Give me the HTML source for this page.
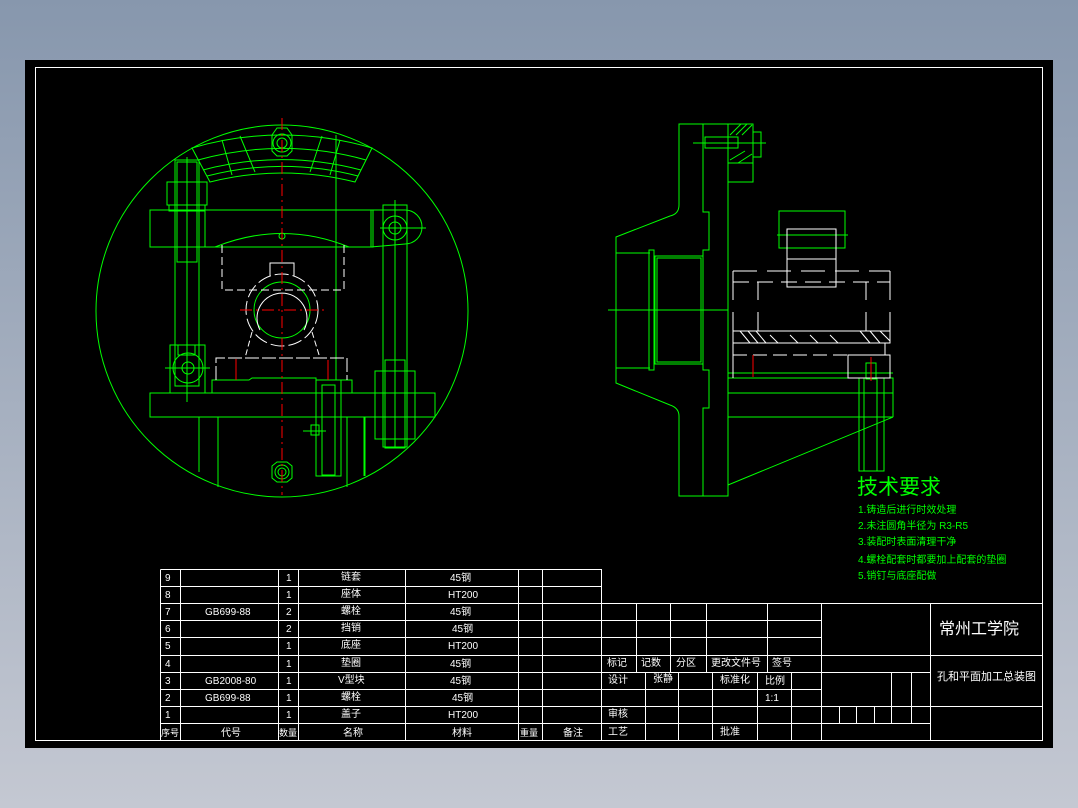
<!DOCTYPE html>
<html><head><meta charset="utf-8"><style>
html,body{margin:0;padding:0;}
body{width:1078px;height:808px;background:linear-gradient(#8797ad,#c4c8d2);overflow:hidden;}
svg{position:absolute;left:0;top:0;}
text{font-family:"Liberation Sans","Noto Sans CJK SC",sans-serif;}
</style></head><body>
<svg width="1078" height="808" viewBox="0 0 1078 808">
<rect x="25" y="60" width="1028" height="688" fill="#000"/>
<rect x="35.5" y="67.5" width="1007" height="673" fill="none" stroke="#fff" stroke-width="1"/>

<!-- LEFT VIEW -->
<g fill="none" stroke="#0f0" stroke-width="1">
<circle cx="282" cy="311" r="186"/>
<!-- top arc segment -->
<path d="M192 148 A318 318 0 0 1 372 148 L355 182 A296 296 0 0 0 210 182 Z"/>
<path d="M198 160 A310 310 0 0 1 366 160"/>
<path d="M203 170 A305 305 0 0 1 361 170"/>
<path d="M207 176 A300 300 0 0 1 358 176"/>
<path d="M222 140 L232 175 M240 136 L255 172 M322 136 L310 172 M340 140 L330 175"/>
<!-- top nut -->
<polygon points="272,135 277,128 287,128 292,135 292,151 287,156 277,156 272,151"/>
<circle cx="282" cy="143" r="9"/><circle cx="282" cy="143" r="5"/>
<!-- crossbar -->
<rect x="150" y="210" width="223" height="37"/>
<line x1="205" y1="210" x2="205" y2="247"/>
<path d="M371 210 L405 210 A17 17 0 0 1 405 244 L371 247"/>
<line x1="371" y1="210" x2="371" y2="247"/>
<circle cx="395" cy="228" r="12"/><circle cx="395" cy="228" r="6"/>
<line x1="380" y1="228" x2="426" y2="228"/><line x1="395" y1="203" x2="395" y2="240"/>
<!-- left bolt -->
<rect x="175" y="160" width="24" height="226"/>
<rect x="177" y="162" width="20" height="100"/>
<rect x="167" y="182" width="40" height="23"/>
<rect x="169" y="205" width="36" height="6"/>
<line x1="187" y1="157" x2="187" y2="402"/>
<!-- left eye -->
<rect x="170" y="345" width="35" height="48"/>
<circle cx="188" cy="368" r="15"/><circle cx="188" cy="368" r="6"/>
<line x1="165" y1="368" x2="210" y2="368"/>
<rect x="178" y="345" width="17" height="10"/>
<!-- base -->
<rect x="150" y="393" width="285" height="24"/>
<path d="M212 393 L212 380 L249 380 L252 378 L316 378 L316 393 M341 380 L352 380 L352 393"/>
<path d="M199 417 L199 472 M218 417 L218 487 M347 417 L347 487 M364 417 L364 476 M365 417 L365 476"/>
<!-- right rod -->
<rect x="383" y="205" width="24" height="242"/>
<rect x="375" y="371" width="40" height="68"/>
<rect x="385" y="360" width="20" height="88"/>
<line x1="395" y1="200" x2="395" y2="447"/>
<!-- pin -->
<rect x="316" y="380" width="25" height="96"/>
<rect x="322" y="385" width="13" height="90"/>
<rect x="311" y="425" width="8" height="10"/>
<line x1="303" y1="431" x2="326" y2="431"/>
<line x1="336" y1="135" x2="336" y2="380"/>
<!-- bearing -->
<circle cx="282" cy="310" r="28"/>
<!-- bottom nut -->
<polygon points="272,466 277,462 287,462 292,466 292,478 287,482 277,482 272,478"/>
<circle cx="282" cy="472" r="7"/><circle cx="282" cy="472" r="4"/>
<circle cx="282" cy="236" r="3"/>
<path d="M215 247 Q282 220 349 247"/>
</g>
<g fill="none" stroke="#fff" stroke-width="1">
<path d="M222 245 L222 290 L344 290 L344 245" stroke-dasharray="8 4"/>
<path d="M270 276 L270 263 L294 263 L294 276"/>
<circle cx="282" cy="310" r="36" stroke-dasharray="14 4"/>
<path d="M260 330 A25 25 0 1 1 304 330"/>
<path d="M252 332 L245 358 M312 332 L320 358" stroke-dasharray="6 3"/>
<path d="M216 380 L216 358 L347 358 L347 380" stroke-dasharray="14 3"/>
</g>
<line x1="282" y1="118" x2="282" y2="495" stroke="#f00" stroke-dasharray="12 4 2 4"/>
<line x1="240" y1="310" x2="326" y2="310" stroke="#f00" stroke-dasharray="12 4 2 4"/>
<line x1="236" y1="359" x2="236" y2="380" stroke="#f00"/>
<line x1="328" y1="360" x2="328" y2="380" stroke="#f00"/>

<!-- RIGHT VIEW -->
<g fill="none" stroke="#0f0" stroke-width="1">
<path d="M679 124 L679 205 Q679 214 670 216 L616 237 L616 383 L670 405 Q679 408 679 416 L679 496 L728 496 L728 124 Z"/>
<path d="M703 124 L703 212 L709 212 L709 250 L703 250 L703 370 L709 370 L709 408 L703 408 L703 496"/>
<path d="M616 253 L650 253 M616 368 L650 368"/>
<rect x="649" y="250" width="5" height="120"/>
<rect x="655" y="256" width="48" height="108"/>
<rect x="657" y="258" width="44" height="104"/>
<line x1="608" y1="310" x2="728" y2="310"/>
<rect x="728" y="124" width="25" height="58"/>
<rect x="753" y="132" width="8" height="25"/>
<rect x="705" y="137" width="33" height="11"/>
<line x1="693" y1="143" x2="766" y2="143"/>
<line x1="728" y1="163" x2="753" y2="163"/>
<path d="M730 135 L741 124 M736 135 L747 124 M742 135 L752 125 M730 160 L745 151 M738 163 L752 154"/>
<!-- top block -->
<rect x="779" y="211" width="66" height="37"/>
<line x1="777" y1="235" x2="848" y2="235"/>
<!-- lower -->
<path d="M728 373 L893 373 M728 378 L893 378 L893 417 M728 393 L893 393 M728 417 L893 417 L728 485"/>
<rect x="859" y="378" width="25" height="93"/>
<line x1="864" y1="378" x2="864" y2="471"/><line x1="877" y1="378" x2="877" y2="471"/>
<rect x="866" y="363" width="10" height="16"/>
</g>
<g fill="none" stroke="#fff" stroke-width="1">
<rect x="787" y="229" width="49" height="58"/>
<line x1="787" y1="259" x2="836" y2="259"/>
<path d="M733 271 L890 271" stroke-dasharray="24 10"/>
<path d="M733 282 L890 282" stroke-dasharray="16 8"/>
<path d="M733 271 L733 300 M890 271 L890 300 M758 282 L758 300 M866 282 L866 300"/>
<path d="M733 312 L733 342 M890 312 L890 342 M758 312 L758 331 M866 312 L866 331"/>
<rect x="733" y="331" width="157" height="12"/>
<path d="M740 331 L750 343 M748 331 L758 343 M756 331 L766 343 M770 335 L778 343 M790 335 L798 343 M810 335 L818 343 M830 335 L838 343 M860 331 L870 343 M870 331 L880 343 M880 331 L890 341"/>
<path d="M733 355 L850 355" stroke-dasharray="14 6"/>
<path d="M733 343 L733 378 M885 343 L885 355"/>
<rect x="848" y="355" width="42" height="23"/>
</g>
<line x1="753" y1="355" x2="753" y2="377" stroke="#f00"/>
<line x1="871" y1="357" x2="871" y2="381" stroke="#f00"/>

<!-- tech requirements -->
<g fill="#0f0">
<text x="857" y="494" font-size="21">技术要求</text>
<text x="858" y="513" font-size="10">1.铸造后进行时效处理</text>
<text x="858" y="529" font-size="10">2.未注圆角半径为 R3-R5</text>
<text x="858" y="545" font-size="10">3.装配时表面清理干净</text>
<text x="858" y="563" font-size="10">4.螺栓配套时都要加上配套的垫圈</text>
<text x="858" y="579" font-size="10">5.销钉与底座配做</text>
</g>

<!-- parts list -->
<g stroke="#fff" stroke-width="1" fill="none">
<path d="M160.5 569.5 H601.5 V603.5 M160.5 586.5 H601.5 M160.5 603.5 H601.5 M160.5 620.5 H601.5 M160.5 637.5 H601.5 M160.5 655.5 H601.5 M160.5 672.5 H601.5 M160.5 689.5 H601.5 M160.5 706.5 H601.5 M160.5 723.5 H601.5"/>
<path d="M160.5 569.5 V740.5 M180.5 569.5 V740.5 M278.5 569.5 V740.5 M298.5 569.5 V740.5 M405.5 569.5 V740.5 M518.5 569.5 V740.5 M542.5 569.5 V740.5"/>
<!-- title block -->
<path d="M601.5 603.5 H1042.5 M601.5 620.5 H821.5 M601.5 637.5 H821.5 M601.5 655.5 H1042.5 M601.5 672.5 H930.5 M601.5 689.5 H821.5 M601.5 706.5 H1042.5 M601.5 723.5 H821.5"/>
<path d="M601.5 603.5 V740.5 M636.5 603.5 V672.5 M670.5 603.5 V672.5 M706.5 603.5 V672.5 M767.5 603.5 V672.5 M821.5 603.5 V740.5 M930.5 603.5 V740.5"/>
<path d="M645.5 672.5 V740.5 M678.5 672.5 V740.5 M712.5 672.5 V740.5 M757.5 672.5 V740.5 M791.5 672.5 V740.5"/>
<path d="M891.5 672.5 V723.5 M911.5 672.5 V723.5 M839.5 706.5 V723.5 M856.5 706.5 V723.5 M874.5 706.5 V723.5 M821.5 723.5 H930.5"/>
</g>
<g fill="#fff" font-size="10">
<text x="165" y="581">9</text><text x="165" y="598">8</text><text x="165" y="615">7</text><text x="165" y="632">6</text><text x="165" y="649">5</text><text x="165" y="667">4</text><text x="165" y="684">3</text><text x="165" y="701">2</text><text x="165" y="718">1</text>
<text x="161" y="736" font-size="9">序号</text><text x="221" y="736">代号</text><text x="279" y="736" font-size="9">数量</text><text x="343" y="736">名称</text><text x="452" y="736">材料</text><text x="520" y="736" font-size="9">重量</text><text x="563" y="736">备注</text>
<text x="205" y="615">GB699-88</text><text x="205" y="684">GB2008-80</text><text x="205" y="701">GB699-88</text>
<text x="286" y="581">1</text><text x="286" y="598">1</text><text x="286" y="615">2</text><text x="286" y="632">2</text><text x="286" y="649">1</text><text x="286" y="667">1</text><text x="286" y="684">1</text><text x="286" y="701">1</text><text x="286" y="718">1</text>
<text x="341" y="580">链套</text><text x="341" y="597">座体</text><text x="341" y="614">螺栓</text><text x="341" y="631">挡销</text><text x="341" y="648">底座</text><text x="341" y="666">垫圈</text><text x="338" y="683">V型块</text><text x="341" y="700">螺栓</text><text x="341" y="717">盖子</text>
<text x="450" y="581">45钢</text><text x="448" y="598">HT200</text><text x="450" y="615">45钢</text><text x="452" y="632">45钢</text><text x="448" y="649">HT200</text><text x="450" y="667">45钢</text><text x="450" y="684">45钢</text><text x="452" y="701">45钢</text><text x="448" y="718">HT200</text>
<text x="607" y="666">标记</text><text x="641" y="666">记数</text><text x="676" y="666">分区</text><text x="711" y="666">更改文件号</text><text x="772" y="666">签号</text>
<text x="608" y="683">设计</text><text x="653" y="682">张静</text><text x="720" y="683">标准化</text><text x="765" y="684">比例</text><text x="765" y="701">1:1</text>
<text x="608" y="717">审核</text><text x="608" y="735">工艺</text><text x="720" y="735">批准</text>
<text x="939" y="634" font-size="16">常州工学院</text>
<text x="937" y="680" font-size="11">孔和平面加工总装图</text>
</g>
</svg>
</body></html>
